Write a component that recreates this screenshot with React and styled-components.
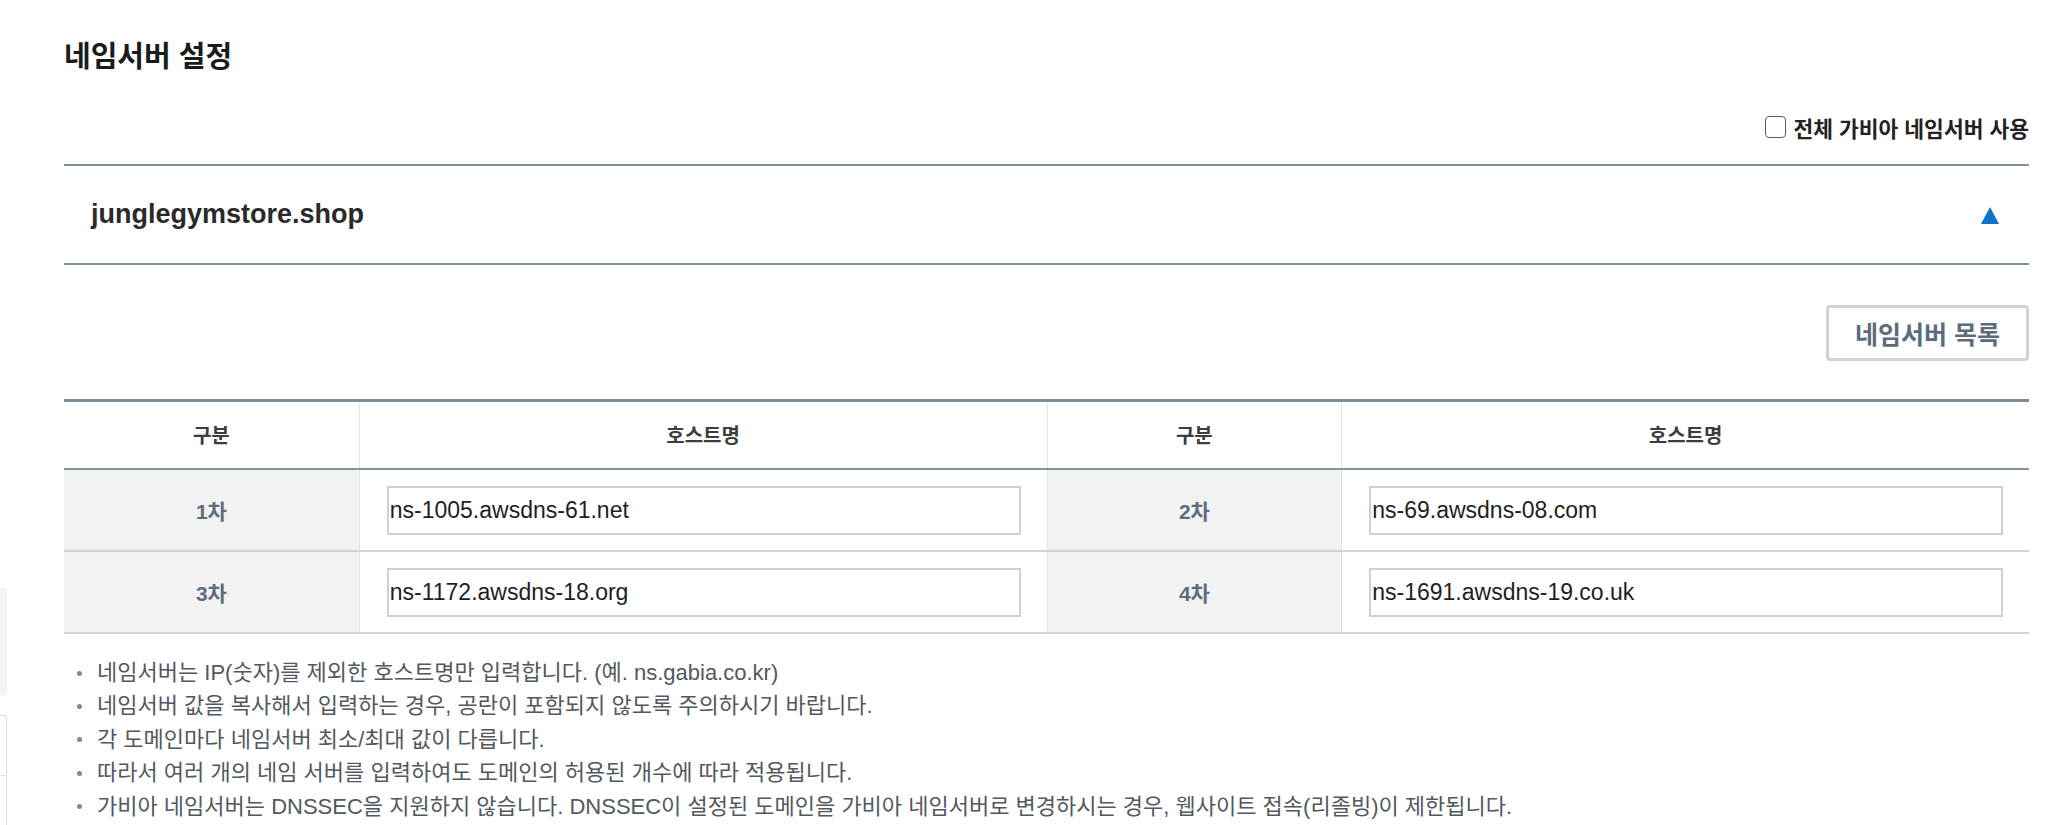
import React from "react";
import styled, { createGlobalStyle } from "styled-components";

const GlobalStyle = createGlobalStyle`
  html, body {
    margin: 0;
    padding: 0;
    background: #ffffff;
  }
  body {
    font-family: "Liberation Sans", "Noto Sans CJK KR", sans-serif;
    color: #333;
  }
  * { box-sizing: border-box; }
`;

const Page = styled.div`
  display: flex;
  align-items: flex-start;
  width: 2048px;
  height: 825px;
  overflow: hidden;
  background: #fff;
`;

const SideStub = styled.div`
  width: 7px;
  height: 825px;
  flex: none;
  display: flex;
  flex-direction: column;
  padding-top: 588px;
`;

const GrayStub = styled.div`
  height: 107px;
  background: #f4f4f4;
`;

const BorderStub = styled.div`
  flex: 1;
  margin-top: 20px;
  border: 1px solid #dcdcdc;
  border-left: none;
  border-bottom: none;
  border-top-right-radius: 4px;
`;

const StubLine = styled.div`
  height: 60px;
  border-bottom: 1px solid #e2e2e2;
`;

const Main = styled.main`
  margin-left: 57px;
  width: 1965px;
  flex: none;
`;

const Title = styled.h2`
  margin: 37px 0 0;
  height: 40px;
  line-height: 40px;
  font-size: 29px;
  font-weight: 700;
  color: #1b1b1b;
`;

const CheckRow = styled.div`
  display: flex;
  justify-content: flex-end;
  align-items: center;
  height: 40px;
  margin: 30px 0 17px;
`;

const CheckLabel = styled.label`
  display: flex;
  align-items: center;
  gap: 7px;
  font-size: 21.5px;
  font-weight: 700;
  color: #222;
  cursor: pointer;
`;

const CheckBox = styled.input`
  appearance: none;
  -webkit-appearance: none;
  margin: 0;
  width: 21px;
  height: 22px;
  border: 1.5px solid #5c5c5c;
  border-radius: 4px;
  background: #fff;
`;

const DomainBar = styled.div`
  display: flex;
  align-items: center;
  justify-content: space-between;
  height: 101px;
  border-top: 2px solid #7f8f9e;
  border-bottom: 2px solid #7f8f9e;
  padding: 0 30px 0 27px;
`;

const DomainName = styled.span`
  font-size: 27px;
  font-weight: 700;
  color: #2a2a2a;
`;

const ToggleArrow = styled.svg`
  display: block;
  width: 18px;
  height: 17px;
  margin-top: 1px;
`;

const ButtonRow = styled.div`
  display: flex;
  justify-content: flex-end;
  margin-top: 40px;
`;

const ListButton = styled.button`
  width: 203px;
  height: 56px;
  border: 3px solid #d2d2d2;
  border-radius: 4px;
  background: #fff;
  font-family: "Liberation Sans", "Noto Sans CJK KR", sans-serif;
  font-size: 25px;
  font-weight: 700;
  color: #5b6b7b;
  padding: 0;
  cursor: pointer;
`;

const Grid = styled.div`
  margin-top: 38px;
  border-top: 3px solid #7b8c9b;
`;

const GridRow = styled.div`
  display: grid;
  grid-template-columns: 15fr 35fr 15fr 35fr;
  height: ${(p) => (p.$head ? "68px" : "82px")};
  border-bottom: 2px solid ${(p) => (p.$head ? "#8294a3" : "#d2d2d2")};
`;

const HeadCell = styled.div`
  display: flex;
  align-items: center;
  justify-content: center;
  font-size: 20px;
  font-weight: 700;
  color: #3d3d3d;
  background: #fff;
  border-left: ${(p) => (p.$first ? "none" : "1px solid #e4e4e4")};
  padding-bottom: 2px;
`;

const LabelCell = styled.div`
  display: flex;
  align-items: center;
  justify-content: center;
  font-size: 21px;
  font-weight: 700;
  color: #5d6d7d;
  background: #f2f2f2;
  border-left: ${(p) => (p.$first ? "none" : "1px solid #e4e4e4")};
`;

const InputCell = styled.div`
  display: flex;
  align-items: center;
  padding: 0 26px 0 27px;
  border-left: 1px solid #e4e4e4;
  background: #fff;
`;

const HostInput = styled.input`
  width: 100%;
  height: 49px;
  border: 2px solid #d0d0d0;
  border-radius: 0;
  padding: 0 0 0 1px;
  margin: 0;
  font-family: "Liberation Sans", "Noto Sans CJK KR", sans-serif;
  font-size: 23px;
  color: #1e1e1e;
  background: #fff;
  outline: none;
`;

const Notes = styled.ul`
  list-style: none;
  margin: 22px 0 0;
  padding: 0;
`;

const Note = styled.li`
  position: relative;
  padding-left: 33px;
  font-size: 22px;
  line-height: 33.4px;
  color: #52585e;
  white-space: nowrap;

  &::before {
    content: "";
    position: absolute;
    left: 13px;
    top: 14.5px;
    width: 5px;
    height: 5px;
    border-radius: 50%;
    background: #7d8a97;
  }
`;

const rows = [
  [
    { label: "1차", host: "ns-1005.awsdns-61.net" },
    { label: "2차", host: "ns-69.awsdns-08.com" },
  ],
  [
    { label: "3차", host: "ns-1172.awsdns-18.org" },
    { label: "4차", host: "ns-1691.awsdns-19.co.uk" },
  ],
];

const notes = [
  "네임서버는 IP(숫자)를 제외한 호스트명만 입력합니다. (예. ns.gabia.co.kr)",
  "네임서버 값을 복사해서 입력하는 경우, 공란이 포함되지 않도록 주의하시기 바랍니다.",
  "각 도메인마다 네임서버 최소/최대 값이 다릅니다.",
  "따라서 여러 개의 네임 서버를 입력하여도 도메인의 허용된 개수에 따라 적용됩니다.",
  "가비아 네임서버는 DNSSEC을 지원하지 않습니다. DNSSEC이 설정된 도메인을 가비아 네임서버로 변경하시는 경우, 웹사이트 접속(리졸빙)이 제한됩니다.",
];

export default function App() {
  return (
    <>
      <GlobalStyle />
      <Page>
        <SideStub>
          <GrayStub />
          <BorderStub>
            <StubLine />
          </BorderStub>
        </SideStub>
        <Main>
          <Title>네임서버 설정</Title>
          <CheckRow>
            <CheckLabel>
              <CheckBox type="checkbox" />
              전체 가비아 네임서버 사용
            </CheckLabel>
          </CheckRow>
          <DomainBar>
            <DomainName>junglegymstore.shop</DomainName>
            <ToggleArrow viewBox="0 0 18 17" aria-hidden="true">
              <polygon points="9,0 18,17 0,17" fill="#0b74c8" />
            </ToggleArrow>
          </DomainBar>
          <ButtonRow>
            <ListButton type="button">네임서버 목록</ListButton>
          </ButtonRow>
          <Grid>
            <GridRow $head>
              <HeadCell $first>구분</HeadCell>
              <HeadCell>호스트명</HeadCell>
              <HeadCell>구분</HeadCell>
              <HeadCell>호스트명</HeadCell>
            </GridRow>
            {rows.map((row, i) => (
              <GridRow key={i}>
                {row.map((c, j) => (
                  <React.Fragment key={c.label}>
                    <LabelCell $first={j === 0}>{c.label}</LabelCell>
                    <InputCell>
                      <HostInput type="text" defaultValue={c.host} />
                    </InputCell>
                  </React.Fragment>
                ))}
              </GridRow>
            ))}
          </Grid>
          <Notes>
            {notes.map((n) => (
              <Note key={n}>{n}</Note>
            ))}
          </Notes>
        </Main>
      </Page>
    </>
  );
}
